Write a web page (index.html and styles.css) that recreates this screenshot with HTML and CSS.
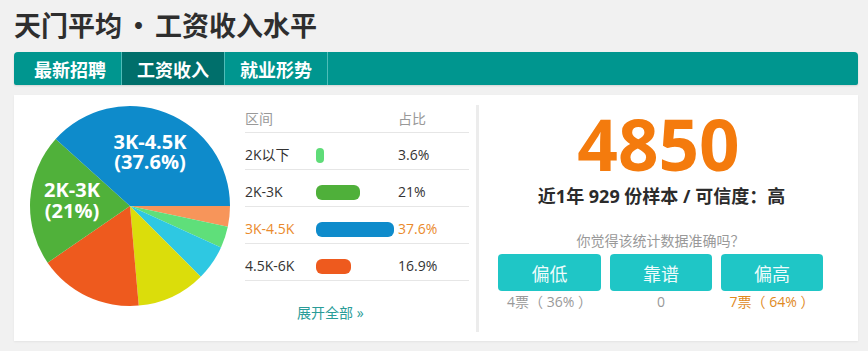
FILE: index.html
```html
<!DOCTYPE html>
<html lang="zh-CN">
<head>
<meta charset="utf-8">
<title>天门平均 • 工资收入水平</title>
<link rel="stylesheet" href="styles.css">
</head>
<body>
<h1 class="title">天门平均<span class="dot">•</span>工资收入水平</h1>
<nav class="tabs">
  <a class="tab">最新招聘</a>
  <a class="tab active">工资收入</a>
  <a class="tab">就业形势</a>
</nav>
<section class="card">
  <svg class="pie" width="202" height="202" viewBox="0 0 202 202">
    <path d="M101 101 L201 101 A100 100 0 0 1 198.81 121.79 Z" fill="#f7955a"/>
    <path d="M101 101 L198.81 121.79 A100 100 0 0 1 192.00 142.47 Z" fill="#5fdf7a"/>
    <path d="M101 101 L192.00 142.47 A100 100 0 0 1 171.71 171.71 Z" fill="#2ec8e2"/>
    <path d="M101 101 L171.71 171.71 A100 100 0 0 1 109.72 200.62 Z" fill="#dbdd0b"/>
    <path d="M101 101 L109.72 200.62 A100 100 0 0 1 18.59 157.64 Z" fill="#ee5a1e"/>
    <path d="M101 101 L18.59 157.64 A100 100 0 0 1 26.69 34.09 Z" fill="#50b13a"/>
    <path d="M101 101 L26.69 34.09 A100 100 0 0 1 201 101 Z" fill="#0e8bcb"/>
    <text class="pie-label" text-anchor="middle"><tspan x="121" y="43.5">3K-4.5K</tspan><tspan x="121" y="63.5">(37.6%)</tspan></text>
    <text class="pie-label" text-anchor="middle"><tspan x="43" y="92">2K-3K</tspan><tspan x="43" y="113">(21%)</tspan></text>
  </svg>
  <div class="table">
    <div class="row head">
      <span class="c-label">区间</span><span class="c-bar"></span><span class="c-pct">占比</span>
    </div>
    <div class="row">
      <span class="c-label">2K以下</span><span class="c-bar"><i class="bar b-lgreen" style="width:8px"></i></span><span class="c-pct">3.6%</span>
    </div>
    <div class="row">
      <span class="c-label">2K-3K</span><span class="c-bar"><i class="bar b-green" style="width:44px"></i></span><span class="c-pct">21%</span>
    </div>
    <div class="row hl">
      <span class="c-label">3K-4.5K</span><span class="c-bar"><i class="bar b-blue" style="width:78px"></i></span><span class="c-pct">37.6%</span>
    </div>
    <div class="row">
      <span class="c-label">4.5K-6K</span><span class="c-bar"><i class="bar b-red" style="width:35px"></i></span><span class="c-pct">16.9%</span>
    </div>
    <a class="more">展开全部 »</a>
  </div>
  <div class="divider"></div>
  <div class="stats">
    <div class="num">4850</div>
    <div class="sub">近1年 929 份样本 / 可信度：高</div>
    <div class="ask">你觉得该统计数据准确吗？</div>
    <div class="votes">
      <div class="vote"><button class="btn">偏低</button><span class="cnt">4票（ 36% ）</span></div>
      <div class="vote"><button class="btn">靠谱</button><span class="cnt">0</span></div>
      <div class="vote"><button class="btn">偏高</button><span class="cnt orange">7票（ 64% ）</span></div>
    </div>
  </div>
</section>
</body>
</html>
```
FILE: styles.css
```css
* { box-sizing: border-box; }
html, body { margin: 0; padding: 0; }
body {
  background: #f1f1f1;
  font-family: "Open Sans", "Noto Sans CJK SC", sans-serif;
  color: #333;
  width: 868px;
  height: 351px;
  overflow: hidden;
}
.title {
  margin: 0 0 0 14px;
  padding-top: 5px;
  height: 52px;
  line-height: 40px;
  font-family: "Noto Sans CJK SC", sans-serif;
  font-size: 27px;
  font-weight: 700;
  color: #2e2e2e;
}
.title .dot { display: inline-block; margin: 0 3px; font-weight: 700; }
.tabs {
  display: flex;
  margin: 0 10px 0 14px;
  height: 33px;
  padding-left: 5px;
  background: #00968f;
  border-radius: 4px 4px 2px 2px;
  box-shadow: 0 1px 2px rgba(0,0,0,0.12);
}
.tab {
  display: block;
  padding: 2px 15px 0;
  line-height: 31px;
  font-family: "Noto Sans CJK SC", sans-serif;
  font-size: 18px;
  font-weight: 700;
  color: #fff;
  border-right: 1px solid #4fbdb8;
}
.tab.active { background: #006f6b; }
.card {
  display: flex;
  margin: 10px 10px 0 14px;
  height: 246px;
  padding: 10px 0 9px 15px;
  background: #fff;
  box-shadow: 0 1px 2px rgba(0,0,0,0.06);
}
.pie { display: block; flex: none; }
.pie-label {
  font-family: "Open Sans", sans-serif;
  font-weight: 700;
  font-size: 20px;
  fill: #fff;
}
.table { width: 224px; margin-left: 14px; flex: none; }
.row {
  display: flex;
  align-items: center;
  height: 37px;
  padding-top: 8px;
  border-bottom: 1px solid #e6e6e6;
  font-size: 14px;
  line-height: 28px;
}
.row.head {
  height: 28px;
  padding-top: 3px;
  padding-bottom: 2px;
  line-height: 22px;
  color: #999;
  align-items: flex-start;
}
.c-label { width: 71px; flex: none; }
.c-bar { width: 82px; flex: none; display: flex; align-items: center; }
.c-pct { flex: 1; }
.row.hl { color: #ea8a2c; }
.bar { display: block; height: 15px; border-radius: 6px; }
.b-lgreen { background: #5fdc78; border-radius: 4px; }
.b-green { background: #4fb03a; }
.b-blue { background: #0e8bcb; }
.b-red { background: #ee5a1e; }
.more {
  display: block;
  margin-top: 22px;
  padding-left: 52px;
  line-height: 20px;
  font-size: 14px;
  color: #2a9c98;
}
.divider { width: 3px; margin-left: 7px; background: #ececec; flex: none; }
.stats {
  flex: 1;
  padding-right: 20px;
  display: flex;
  flex-direction: column;
  align-items: center;
}
.num {
  margin-top: 6px;
  font-family: "Open Sans", sans-serif;
  font-weight: 700;
  font-size: 71px;
  line-height: 66px;
  color: #f47b0d;
}
.sub {
  margin-top: 7px;
  margin-left: 6px;
  font-size: 18px;
  font-weight: 700;
  line-height: 24px;
  color: #2b2b2b;
}
.ask {
  margin-top: 23px;
  margin-left: 4px;
  font-size: 14px;
  line-height: 20px;
  color: #999;
}
.votes { display: flex; gap: 9px; margin-top: 3px; margin-left: 4px; }
.vote { display: flex; flex-direction: column; align-items: center; }
.btn {
  width: 102px;
  height: 37px;
  border: 0;
  border-radius: 4px;
  background: #1fc6c6;
  color: #eefcfc;
  font-family: "Noto Sans CJK SC", sans-serif;
  font-size: 18px;
  padding: 0;
}
.vote:first-child .btn { width: 103px; }
.cnt { margin-top: 1px; font-size: 14px; line-height: 20px; color: #999; }
.cnt.orange { color: #e08a1e; }
```
